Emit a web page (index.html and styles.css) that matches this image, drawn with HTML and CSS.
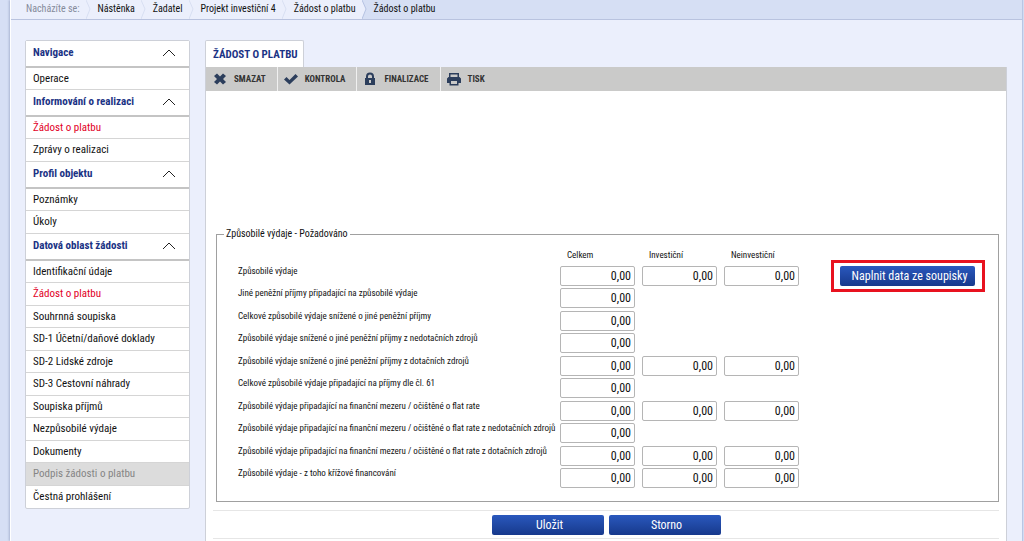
FILE: index.html
```html
<!DOCTYPE html>
<html lang="cs">
<head>
<meta charset="utf-8">
<meta name="viewport" content="width=device-width, initial-scale=1">
<title>Žádost o platbu</title>
<link rel="stylesheet" href="styles.css">
</head>
<body>
<div class="page">
  <nav class="breadcrumb" aria-label="Nacházíte se">
    <span class="crumb crumb-label">Nacházíte se:<svg class="arrow" viewBox="0 0 5 19"><path d="M0 0 4 9 0 19"/></svg></span>
    <a class="crumb" href="#">Nástěnka<svg class="arrow" viewBox="0 0 5 19"><path d="M0 0 4 9 0 19"/></svg></a>
    <a class="crumb" href="#">Žadatel<svg class="arrow" viewBox="0 0 5 19"><path d="M0 0 4 9 0 19"/></svg></a>
    <a class="crumb" href="#">Projekt investiční 4<svg class="arrow" viewBox="0 0 5 19"><path d="M0 0 4 9 0 19"/></svg></a>
    <a class="crumb crumb-last" href="#">Žádost o platbu<svg class="arrow" viewBox="0 0 5 19"><path d="M0 0 4 9 0 19"/></svg></a>
    <a class="crumb-current" href="#">Žádost o platbu</a>
  </nav>
  <div class="columns">
    <aside class="sidebar">
      <button class="group" type="button">Navigace<svg class="chevron" viewBox="0 0 14 8"><path d="M1 7 7 1l6 6"/></svg></button>
      <ul class="menu">
        <li><a href="#">Operace</a></li>
      </ul>
      <button class="group" type="button">Informování o realizaci<svg class="chevron" viewBox="0 0 14 8"><path d="M1 7 7 1l6 6"/></svg></button>
      <ul class="menu">
        <li><a class="active" href="#">Žádost o platbu</a></li>
        <li><a href="#">Zprávy o realizaci</a></li>
      </ul>
      <button class="group" type="button">Profil objektu<svg class="chevron" viewBox="0 0 14 8"><path d="M1 7 7 1l6 6"/></svg></button>
      <ul class="menu">
        <li><a href="#">Poznámky</a></li>
        <li><a href="#">Úkoly</a></li>
      </ul>
      <button class="group" type="button">Datová oblast žádosti<svg class="chevron" viewBox="0 0 14 8"><path d="M1 7 7 1l6 6"/></svg></button>
      <ul class="menu">
        <li><a href="#">Identifikační údaje</a></li>
        <li><a class="active" href="#">Žádost o platbu</a></li>
        <li><a href="#">Souhrnná soupiska</a></li>
        <li><a href="#">SD-1 Účetní/daňové doklady</a></li>
        <li><a href="#">SD-2 Lidské zdroje</a></li>
        <li><a href="#">SD-3 Cestovní náhrady</a></li>
        <li><a href="#">Soupiska příjmů</a></li>
        <li><a href="#">Nezpůsobilé výdaje</a></li>
        <li><a href="#">Dokumenty</a></li>
        <li class="disabled"><a href="#">Podpis žádosti o platbu</a></li>
        <li><a href="#">Čestná prohlášení</a></li>
      </ul>
    </aside>
    <main class="content">
      <h1 class="tab">ŽÁDOST O PLATBU</h1>
      <div class="panel">
        <div class="toolbar">
          <button class="tool" type="button"><svg class="tool-icon" viewBox="0 0 14 14"><path d="M4 1.500 7 4.500 10 1.500 13 4 10 7 13 10 10 12.500 7 9.500 4 12.500 1 10 4 7 1 4z"/></svg>SMAZAT</button>
          <button class="tool" type="button"><svg class="tool-icon" viewBox="0 0 14 14"><path d="M0 7.500 2.500 5l3 3L11.500 2 14 4.500 5.500 12.500z"/></svg>KONTROLA</button>
          <button class="tool" type="button"><svg class="tool-icon" viewBox="0 0 14 14"><path fill-rule="evenodd" d="M2 6h1V4.500a4 4 0 0 1 8 0V6h1v7H2zM5 6h4V4.500a2 2 0 0 0-4 0zM6 8v3h2V8z"/></svg>FINALIZACE</button>
          <button class="tool" type="button"><svg class="tool-icon" viewBox="0 0 14 14"><path fill-rule="evenodd" d="M2 1h10v4H2zM3.500 2.500V5h7V2.500zM1.500 5h11L14 6.500V11h-2.500v2.500h-9V11H0V6.500zM4 9v3h6V9z"/></svg>TISK</button>
        </div>
        <form class="form">
          <fieldset class="box">
            <legend>Způsobilé výdaje - Požadováno</legend>
            <div class="box-body">
              <table class="amounts">
                <thead>
                  <tr><td></td><th scope="col">Celkem</th><th scope="col">Investiční</th><th scope="col">Neinvestiční</th></tr>
                </thead>
                <tbody>
                  <tr><th scope="row"><label for="r1">Způsobilé výdaje</label></th><td><input id="r1" value="0,00"></td><td><input aria-label="Investiční" value="0,00"></td><td><input aria-label="Neinvestiční" value="0,00"></td></tr>
                  <tr><th scope="row"><label for="r2">Jiné peněžní příjmy připadající na způsobilé výdaje</label></th><td><input id="r2" value="0,00"></td><td></td><td></td></tr>
                  <tr><th scope="row"><label for="r3">Celkové způsobilé výdaje snížené o jiné peněžní příjmy</label></th><td><input id="r3" value="0,00"></td><td></td><td></td></tr>
                  <tr><th scope="row"><label for="r4">Způsobilé výdaje snížené o jiné peněžní příjmy z nedotačních zdrojů</label></th><td><input id="r4" value="0,00"></td><td></td><td></td></tr>
                  <tr><th scope="row"><label for="r5">Způsobilé výdaje snížené o jiné peněžní příjmy z dotačních zdrojů</label></th><td><input id="r5" value="0,00"></td><td><input aria-label="Investiční" value="0,00"></td><td><input aria-label="Neinvestiční" value="0,00"></td></tr>
                  <tr><th scope="row"><label for="r6">Celkové způsobilé výdaje připadající na příjmy dle čl. 61</label></th><td><input id="r6" value="0,00"></td><td></td><td></td></tr>
                  <tr><th scope="row"><label for="r7">Způsobilé výdaje připadající na finanční mezeru / očištěné o flat rate</label></th><td><input id="r7" value="0,00"></td><td><input aria-label="Investiční" value="0,00"></td><td><input aria-label="Neinvestiční" value="0,00"></td></tr>
                  <tr><th scope="row"><label for="r8">Způsobilé výdaje připadající na finanční mezeru / očištěné o flat rate z nedotačních zdrojů</label></th><td><input id="r8" value="0,00"></td><td></td><td></td></tr>
                  <tr><th scope="row"><label for="r9">Způsobilé výdaje připadající na finanční mezeru / očištěné o flat rate z dotačních zdrojů</label></th><td><input id="r9" value="0,00"></td><td><input aria-label="Investiční" value="0,00"></td><td><input aria-label="Neinvestiční" value="0,00"></td></tr>
                  <tr><th scope="row"><label for="r10">Způsobilé výdaje - z toho křížové financování</label></th><td><input id="r10" value="0,00"></td><td><input aria-label="Investiční" value="0,00"></td><td><input aria-label="Neinvestiční" value="0,00"></td></tr>
                </tbody>
              </table>
              <div class="highlight"><button class="btn btn-fill" type="button">Naplnit data ze soupisky</button></div>
            </div>
          </fieldset>
          <div class="actions">
            <button class="btn" type="submit">Uložit</button>
            <button class="btn" type="reset">Storno</button>
          </div>
        </form>
      </div>
    </main>
  </div>
</div>
</body>
</html>
```
FILE: styles.css
```css
* { box-sizing: border-box; }
body {
  margin: 0;
  background: #d6dff5;
  color: #111;
  font-family: "Roboto Condensed", "Liberation Sans Narrow", Roboto, sans-serif;
  font-size: 11px;
}
button, input { font: inherit; color: inherit; }
a { color: inherit; text-decoration: none; }

.page {
  display: flex;
  flex-direction: column;
  min-height: 100vh;
  margin: 0 1px 0 10px;
  background: #ebeffc;
  border-left: 1px solid #fff;
  border-right: 1px solid #b9c6e4;
  box-shadow: -1px 0 2px #a9b4d2;
}

.breadcrumb {
  display: flex;
  height: 20px;
  background: #d6dff4;
  border-bottom: 1px solid #b9c3df;
  font-size: 10px;
  line-height: 18px;
}
.crumb {
  position: relative;
  padding: 0 6px 0 12px;
  background: #ebeffc;
}
.crumb-label { padding-left: 15px; color: #858b9b; }
.arrow {
  position: absolute;
  z-index: 1;
  top: 0;
  right: -5px;
  width: 5px;
  height: 19px;
  fill: #ebeffc;
  stroke: #d8dff2;
}
.crumb-last .arrow { stroke: #b5c2e2; }
.crumb-current { padding-left: 12px; }

.columns {
  display: flex;
  flex: 1;
  gap: 15px;
  padding: 20px 15px 0 14px;
}
.sidebar {
  flex: 0 0 165px;
  align-self: flex-start;
  background: #fff;
  border: 1px solid #cdd0d8;
  border-radius: 2px;
}
.group {
  display: flex;
  align-items: center;
  justify-content: space-between;
  width: 100%;
  height: 27px;
  padding: 0 13px 2px 7px;
  background: #fff;
  border: 0;
  border-bottom: 2px solid #c4c4c4;
  color: #1b3385;
  font-weight: 700;
}
.chevron {
  width: 14px;
  height: 8px;
  fill: none;
  stroke: #222;
}
.menu { margin: 0; padding: 0; list-style: none; }
.menu li {
  height: 22px;
  padding-left: 7px;
  border-bottom: 1px solid #d5d5d5;
  line-height: 22px;
}
.menu li:nth-child(even) { height: 23px; }
.menu:last-child li:last-child { border-bottom: 0; }
.menu .active { color: #e2001f; }
.menu .disabled { background: #dcdcdc; color: #858585; }

.content {
  display: flex;
  flex: 1;
  flex-direction: column;
  min-width: 0;
}
.tab {
  align-self: flex-start;
  height: 27px;
  margin: 0;
  padding: 0 5px 0 7px;
  background: #fff;
  border: 1px solid #cdd0d8;
  border-bottom: 0;
  border-radius: 2px 2px 0 0;
  color: #1b3385;
  font-size: 11px;
  line-height: 28px;
}
.panel {
  flex: 1;
  background: #fff;
  border: 1px solid #cdd0d8;
  border-width: 0 1px;
}
.toolbar {
  display: flex;
  height: 24px;
  padding-left: 1px;
  background: #cacac9;
}
.tool {
  display: flex;
  align-items: center;
  gap: 7px;
  padding: 0 11px 0 6px;
  background: none;
  border: 0;
  border-right: 1px solid #f0f0f0;
  color: #333;
  font-size: 9px;
  font-weight: 700;
}
.tool:last-child { border-right: 0; }
.tool-icon { width: 14px; height: 14px; fill: #2c3e5c; }

.form { padding: 136px 7px 0; }
.box {
  min-width: 0;
  margin: 0 0 0 3px;
  padding: 0 13px 10px 21px;
  border: 1px solid #a0a0a0;
}
.box legend {
  margin-left: -14px;
  padding: 0 2px;
  font-size: 10px;
  line-height: 14px;
}
.box-body { display: flex; align-items: flex-start; }
.amounts {
  border-collapse: collapse;
  font-size: 9px;
  line-height: 10px;
}
.amounts th, .amounts td {
  padding: 0 7px 0 0;
  font-weight: 400;
  text-align: left;
  vertical-align: top;
}
.amounts thead tr { height: 25px; }
.amounts thead th { padding: 9px 0 0 7px; }
.amounts tbody tr { height: 22px; }
.amounts tbody tr:nth-child(even) { height: 23px; }
.amounts tbody th { width: 322px; padding-right: 4px; white-space: nowrap; }
.amounts input {
  display: block;
  width: 75px;
  height: 20px;
  padding: 0 3px;
  background: #fff;
  border: 1px solid #b5b5b5;
  border-radius: 2px;
  font-size: 12px;
  text-align: right;
}
.highlight {
  display: flex;
  margin: 19px 0 0 auto;
  padding: 3px 7px 3px 6px;
  border: 3px solid #e8121f;
}
.btn {
  width: 112px;
  height: 20px;
  padding: 0 0 0 4px;
  background: linear-gradient(#2a58bd, #17398c);
  border: 0;
  border-radius: 2px;
  color: #fff;
  font-size: 12px;
  line-height: 20px;
}
.btn-fill { width: 135px; white-space: nowrap; }
.actions {
  display: flex;
  justify-content: center;
  gap: 5px;
  margin-top: 8px;
  padding: 4px 0 3px;
  border: solid #e6e6e6;
  border-width: 1px 0;
}
```
